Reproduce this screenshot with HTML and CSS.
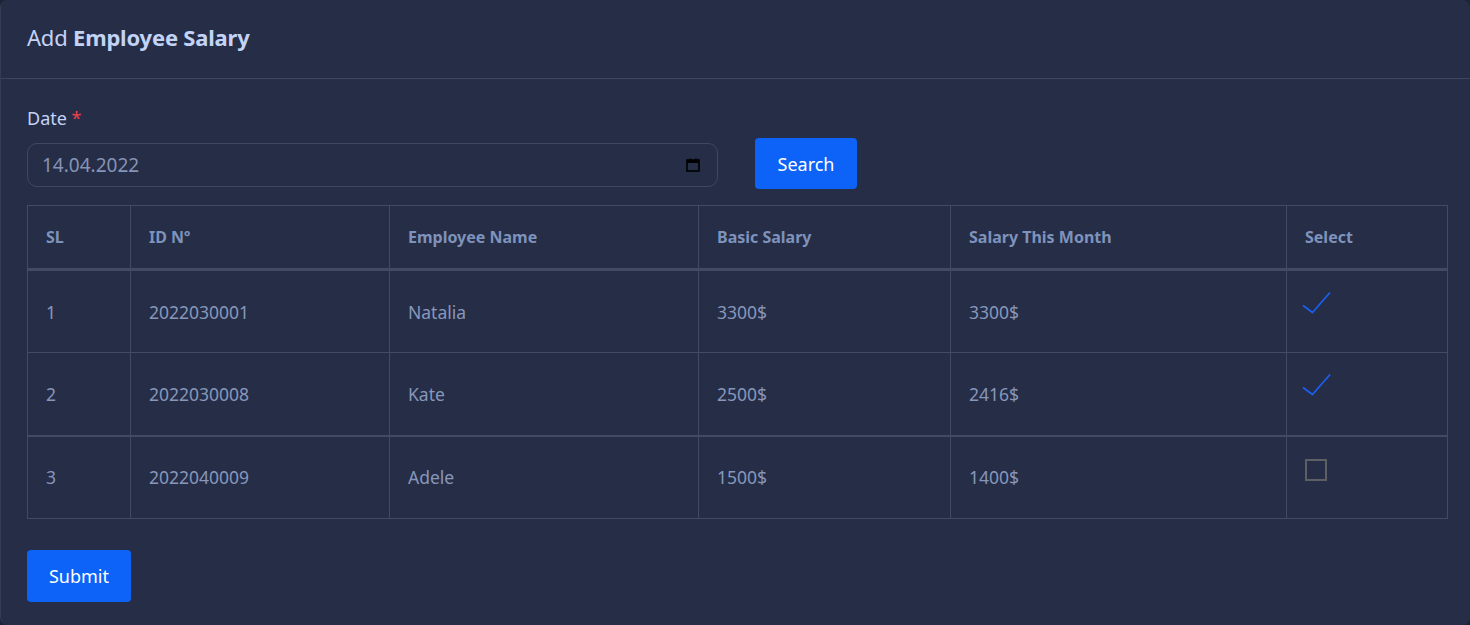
FILE: index.html
```html
<!DOCTYPE html>
<html>
<head>
<meta charset="utf-8">
<link rel="stylesheet" href="styles.css">
</head>
<body>
<div class="card">
  <div class="card-header">
    <h1 class="title">Add <b>Employee Salary</b></h1>
  </div>
  <div class="card-body">
    <label class="label">Date <span class="req">*</span></label>
    <div class="search-row">
      <div class="date-input">
        <span class="date-text">14.04.2022</span>
        <svg class="cal" width="16" height="16" viewBox="0 0 16 16"><rect x="2" y="3" width="12" height="11" fill="none" stroke="#000" stroke-width="1.6"/><rect x="2" y="3" width="12" height="3" fill="#000"/><rect x="4.5" y="1.5" width="1.6" height="2.5" fill="#000"/><rect x="10" y="1.5" width="1.6" height="2.5" fill="#000"/></svg>
      </div>
      <button class="btn">Search</button>
    </div>
    <table class="tbl">
      <colgroup>
        <col style="width:103px"><col style="width:259px"><col style="width:309px"><col style="width:252px"><col style="width:336px"><col style="width:161px">
      </colgroup>
      <thead>
        <tr><th>SL</th><th>ID Nº</th><th>Employee Name</th><th>Basic Salary</th><th>Salary This Month</th><th>Select</th></tr>
      </thead>
      <tbody>
        <tr><td>1</td><td>2022030001</td><td>Natalia</td><td>3300$</td><td>3300$</td><td class="sel"><svg class="check" width="30" height="24" viewBox="0 0 30 24"><polyline points="1,14.5 10.5,21.5 28,1.5" fill="none" stroke="#1a5ff0" stroke-width="1.8" stroke-linejoin="round"/></svg></td></tr>
        <tr><td>2</td><td>2022030008</td><td>Kate</td><td>2500$</td><td>2416$</td><td class="sel"><svg class="check" width="30" height="24" viewBox="0 0 30 24"><polyline points="1,14.5 10.5,21.5 28,1.5" fill="none" stroke="#1a5ff0" stroke-width="1.8" stroke-linejoin="round"/></svg></td></tr>
        <tr><td>3</td><td>2022040009</td><td>Adele</td><td>1500$</td><td>1400$</td><td class="sel"><span class="box"></span></td></tr>
      </tbody>
    </table>
    <button class="btn submit">Submit</button>
  </div>
</div>
</body>
</html>
```
FILE: styles.css
```css
html, body {
  margin: 0;
  padding: 0;
  background: #1e2438;
  font-family: "Noto Sans", "Open Sans", sans-serif;
}
.card {
  background: #262d47;
  border-left: 1px solid #343b55;
  border-radius: 8px;
  height: 625px;
  box-sizing: border-box;
}
.card-header {
  height: 79px;
  border-bottom: 1px solid #3d4560;
  padding: 0 26px 5px;
  display: flex;
  align-items: center;
  box-sizing: border-box;
}
.title {
  margin: 0;
  font-size: 22px;
  font-weight: 400;
  color: #c3d3f6;
  letter-spacing: -0.2px;
}
.title b { font-weight: 700; }
.card-body {
  padding: 27px 22px 0 26px;
}
.label {
  display: block;
  font-size: 18px;
  color: #c3d3f6;
  line-height: 24px;
}
.req { color: #ef3f4a; }
.search-row {
  display: flex;
  align-items: flex-start;
  gap: 37px;
  margin-top: 8px;
}
.date-input {
  width: 691px;
  height: 44px;
  margin-top: 5px;
  box-sizing: border-box;
  border: 1px solid #3f4762;
  border-radius: 10px;
  display: flex;
  align-items: center;
  justify-content: space-between;
  padding: 0 16px 0 14px;
}
.date-text {
  color: #8593b4;
  font-size: 19px;
}
.cal { display: block; }
.btn {
  background: #0d63f8;
  color: #fff;
  border: 0;
  border-radius: 4px;
  font-family: inherit;
  font-size: 18px;
  width: 102px;
  height: 51px;
  padding: 0;
}
.tbl {
  margin-top: 16px;
  border-collapse: collapse;
  table-layout: fixed;
  width: 1421px;
  font-size: 16px;
}
.tbl th, .tbl td {
  border: 1px solid #434a63;
  text-align: left;
  padding: 0 18px;
}
.tbl thead tr { height: 64px; }
.tbl th {
  color: #7e93bc;
  font-weight: 700;
  border-bottom: 3px solid #434a63;
}
.tbl tbody tr { height: 83px; }
.tbl td {
  color: #8797bb;
  font-size: 17.5px;
}
.tbl tbody tr:nth-child(2) td { border-bottom: 2px solid #434a63; }
.tbl td.sel {
  vertical-align: top;
  padding-top: 20px;
  padding-left: 15px;
}
.check { display: block; }
.box {
  display: block;
  width: 18px;
  height: 18px;
  border: 2px solid #5d5f65;
  margin-left: 3px;
  margin-top: 2px;
}
.submit {
  display: block;
  margin-top: 31px;
  width: 104px;
  height: 52px;
}
```
